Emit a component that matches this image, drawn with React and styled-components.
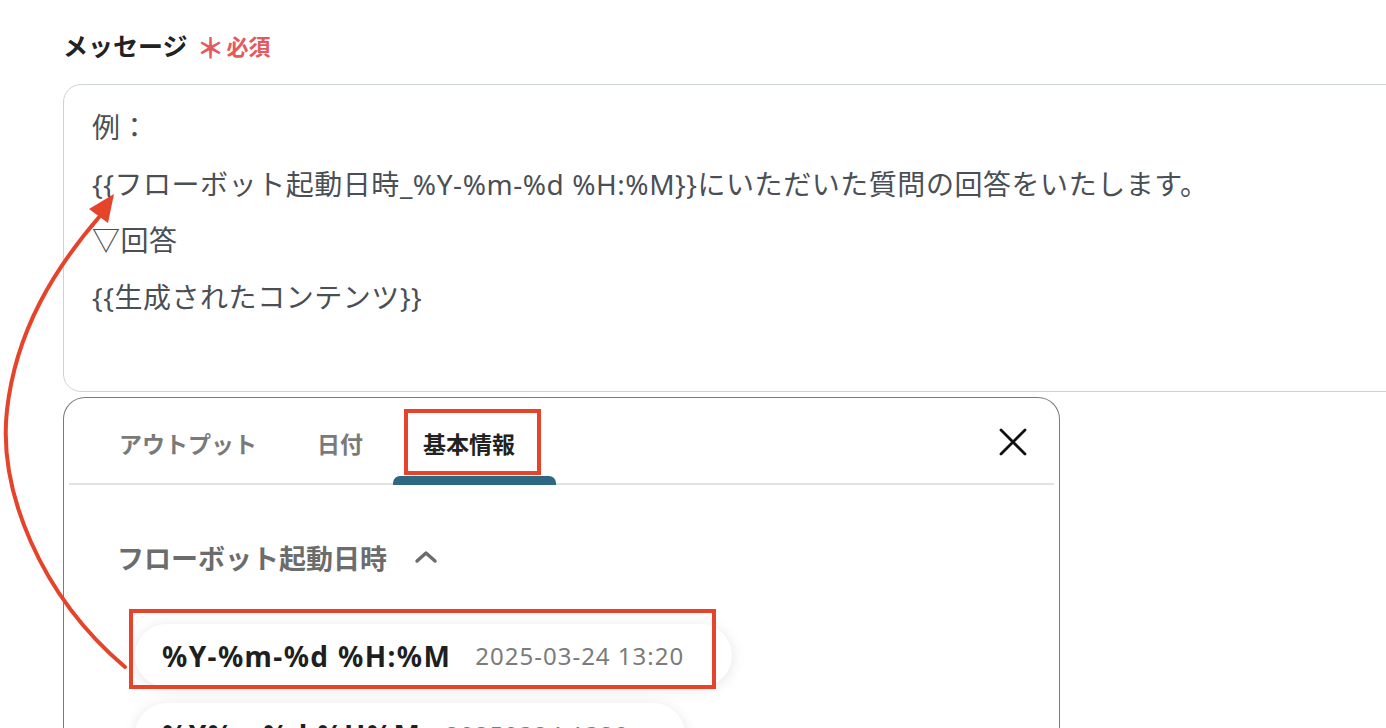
import React from 'react';
import styled, { createGlobalStyle } from 'styled-components';

const GlobalStyle = createGlobalStyle`
  html, body {
    margin: 0;
    padding: 0;
    background: #ffffff;
  }
  body {
    font-family: "Noto Sans", "Noto Sans CJK JP", sans-serif;
  }
`;

const Page = styled.div`
  position: relative;
  height: 728px;
  overflow: hidden;
  padding: 27px 0 0 63px;
  box-sizing: border-box;
`;

const LabelRow = styled.div`
  display: flex;
  align-items: center;
  gap: 9px;
  height: 36px;
`;

const Label = styled.span`
  font-family: "Noto Sans CJK JP", sans-serif;
  font-size: 25px;
  font-weight: 700;
  color: #222222;
`;

const Required = styled.span`
  font-family: "Noto Sans CJK JP", sans-serif;
  font-size: 22px;
  font-weight: 700;
  color: #e5585c;
  display: flex;
  align-items: center;
  gap: 2px;
`;

const Asterisk = styled.span`
  font-size: 28px;
  line-height: 1;
  margin-top: 4px;
`;

const MessageBox = styled.div`
  margin-top: 21px;
  width: 1400px;
  height: 308px;
  box-sizing: border-box;
  border: 1.5px solid #cdd2d7;
  border-radius: 18px;
  padding: 14px 28px;
  color: #4a4f56;
  font-size: 28px;
  letter-spacing: 0.55px;
  line-height: 56.7px;
`;

const Line = styled.div`
  white-space: nowrap;
`;

const Panel = styled.div`
  margin-top: 5px;
  width: 997px;
  height: 400px;
  box-sizing: border-box;
  border: 1.5px solid #7b7b7b;
  border-bottom: none;
  border-radius: 22px 22px 0 0;
  padding: 0 5px;
`;

const TabBar = styled.div`
  display: flex;
  align-items: stretch;
  height: 87px;
  box-sizing: border-box;
  border-bottom: 2px solid #e3e3e3;
  padding: 0 26px 0 30px;
`;

const Tab = styled.div`
  position: relative;
  padding: 28px 20px 0;
  margin-right: 20px;
  font-family: "Noto Sans CJK JP", sans-serif;
  font-size: 23px;
  font-weight: 700;
  color: ${(p) => (p.$active ? '#222222' : '#7a7a7a')};

  &::after {
    content: '';
    display: ${(p) => (p.$active ? 'block' : 'none')};
    position: absolute;
    left: -10px;
    right: -21px;
    bottom: -2px;
    height: 9px;
    border-radius: 7px 7px 0 0;
    background: #2e6781;
  }
`;

const Highlight = styled.div`
  position: absolute;
  border: 4px solid #e5432a;
  box-sizing: border-box;
  pointer-events: none;
  z-index: 2;
`;

const CloseButton = styled.div`
  margin-left: auto;
  align-self: center;
  margin-top: 2px;
  width: 30px;
  height: 30px;
  display: flex;
  align-items: center;
  justify-content: center;
`;

const Section = styled.div`
  padding: 52px 0 0 48px;
`;

const SectionHeader = styled.div`
  display: flex;
  align-items: center;
  gap: 27px;
  font-family: "Noto Sans CJK JP", sans-serif;
  font-size: 27px;
  font-weight: 700;
  color: #6c6c6c;
  height: 40px;
`;

const ChipList = styled.div`
  margin-top: 47px;
  margin-left: 18px;
  display: flex;
  flex-direction: column;
  align-items: flex-start;
  gap: 16px;
  position: relative;
`;

const Chip = styled.div`
  position: relative;
  display: flex;
  align-items: center;
  gap: 24px;
  height: 63px;
  box-sizing: border-box;
  width: ${(p) => p.$width}px;
  padding: 0 27px;
  border-radius: 32px;
  background: #ffffff;
  box-shadow: 0 2px 14px rgba(0, 0, 0, 0.11);
`;

const ChipKey = styled.span`
  font-size: 28px;
  font-weight: 700;
  letter-spacing: 1.4px;
  color: #1f1f1f;
  white-space: nowrap;
`;

const ChipValue = styled.span`
  font-size: 24px;
  letter-spacing: 1px;
  color: #7b7b7b;
  white-space: nowrap;
`;

const ArrowLayer = styled.svg`
  position: absolute;
  left: 0;
  top: 0;
  width: 1386px;
  height: 728px;
  pointer-events: none;
  z-index: 3;
`;

const tabs = ['アウトプット', '日付', '基本情報'];

const chips = [
  { key: '%Y-%m-%d %H:%M', value: '2025-03-24 13:20', width: 597 },
  { key: '%Y%m%d %H%M', value: '20250324 1320', width: 550 },
];

const App = () => {
  return (
    <Page>
      <GlobalStyle />
      <LabelRow>
        <Label>メッセージ</Label>
        <Required>
          <Asterisk>＊</Asterisk>必須
        </Required>
      </LabelRow>
      <MessageBox>
        <Line>例：</Line>
        <Line>{'{{フローボット起動日時_%Y-%m-%d %H:%M}}にいただいた質問の回答をいたします。'}</Line>
        <Line>▽回答</Line>
        <Line>{'{{生成されたコンテンツ}}'}</Line>
      </MessageBox>
      <Panel>
        <TabBar>
          {tabs.map((t, i) => (
            <Tab key={t} $active={i === 2}>
              {t}
              {i === 2 && <Highlight style={{ left: 1, right: -6, top: 11, bottom: 8 }} />}
            </Tab>
          ))}
          <CloseButton>
            <svg width="28" height="28" viewBox="0 0 28 28" fill="none">
              <path d="M2 2L26 26M26 2L2 26" stroke="#111" strokeWidth="2.8" strokeLinecap="round" />
            </svg>
          </CloseButton>
        </TabBar>
        <Section>
          <SectionHeader>
            フローボット起動日時
            <svg width="24" height="16" viewBox="0 0 24 16" fill="none">
              <path d="M3 12L12 4L21 12" stroke="#6c6c6c" strokeWidth="3.4" strokeLinecap="round" strokeLinejoin="round" />
            </svg>
          </SectionHeader>
          <ChipList>
            {chips.map((c) => (
              <Chip key={c.key} $width={c.width}>
                <ChipKey>{c.key}</ChipKey>
                <ChipValue>{c.value}</ChipValue>
              </Chip>
            ))}
            <Highlight style={{ left: -6, top: -15, width: 587, height: 80 }} />
          </ChipList>
        </Section>
      </Panel>
      <ArrowLayer viewBox="0 0 1386 728">
        <path
          d="M125 667 C 40 595, -2 490, 7 410 C 16 330, 55 268, 100 216"
          stroke="#e5432a"
          strokeWidth="4"
          fill="none"
          strokeLinecap="round"
        />
        <polygon points="114,194 89,209 108,223" fill="#e5432a" />
      </ArrowLayer>
    </Page>
  );
};

export default App;
